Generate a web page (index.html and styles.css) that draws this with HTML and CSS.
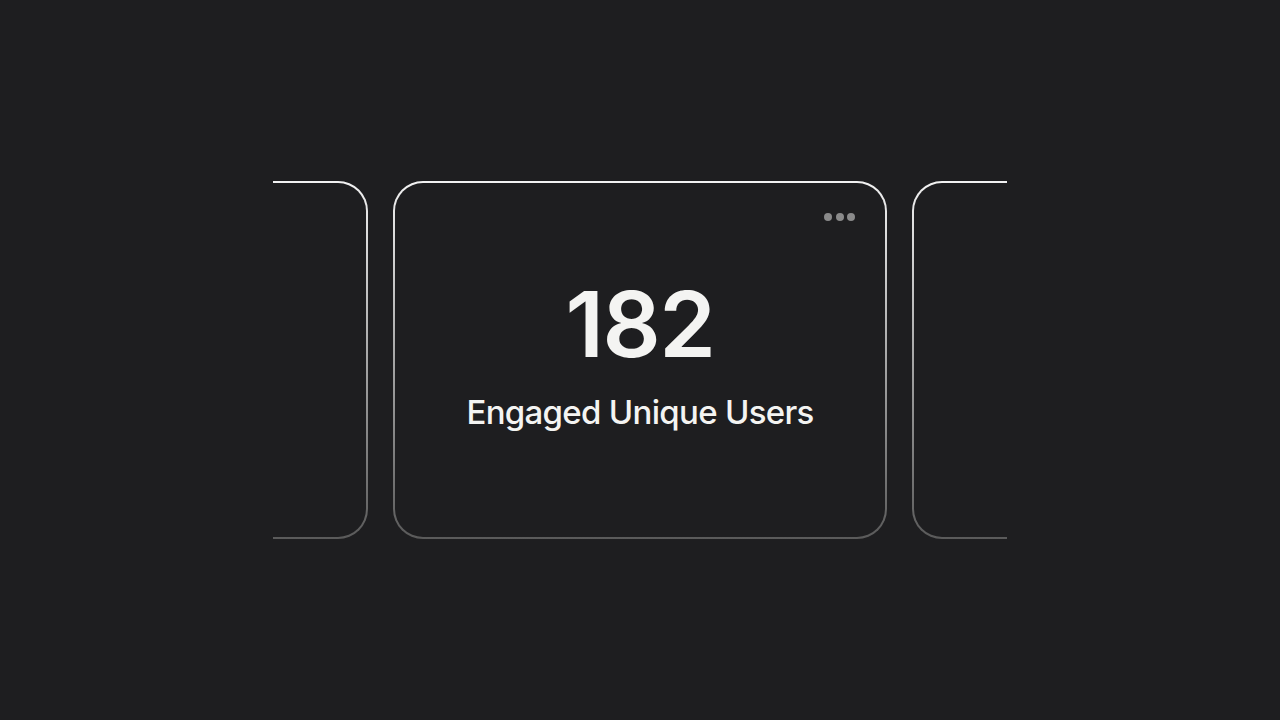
FILE: index.html
```html
<!DOCTYPE html>
<html lang="en">
<head>
  <meta charset="UTF-8">
  <title>Stats Carousel</title>
  <meta name="viewport" content="width=device-width, initial-scale=1">
  <link rel="stylesheet" href="styles.css">
</head>
<body>
  <div class="carousel">
    <div class="track">
      <div class="card"></div>

      <div class="card active">
        <div class="menu">
          <span></span><span></span><span></span>
        </div>
        <div class="value">182</div>
        <div class="label">Engaged Unique Users</div>
      </div>

      <div class="card"></div>
    </div>
  </div>
</body>
</html>
```

FILE: styles.css
```css
body {
  margin: 0;
  height: 100vh;
  background: #1e1e20;
  font-family: Inter, "Open Sans", sans-serif;
  color: #f4f4f2;
  display: flex;
  align-items: center;
  justify-content: center;
}
.carousel {
  width: 734px;
  overflow: hidden;
}
.track {
  display: flex;
  justify-content: center;
  gap: 25px;
}
.card {
  flex: 0 0 494px;
  height: 358px;
  box-sizing: border-box;
  border: 2px solid transparent;
  border-radius: 30px;
  background:
    linear-gradient(#1e1e20, #1e1e20) padding-box,
    linear-gradient(to bottom, #f2f2f2, #5a5a5a) border-box;
  position: relative;
  display: flex;
  flex-direction: column;
  align-items: center;
  padding-top: 96px;
}
.menu {
  position: absolute;
  top: 30px;
  right: 30px;
  display: flex;
  gap: 3.5px;
}
.menu span {
  width: 8px;
  height: 8px;
  border-radius: 50%;
  background: #8a8a8a;
}
.value {
  font-size: 91px;
  font-weight: 600;
  line-height: 1;
  letter-spacing: -1.5px;
}
.label {
  margin-top: 22px;
  font-size: 33px;
  font-weight: 500;
  letter-spacing: -0.7px;
}
```
